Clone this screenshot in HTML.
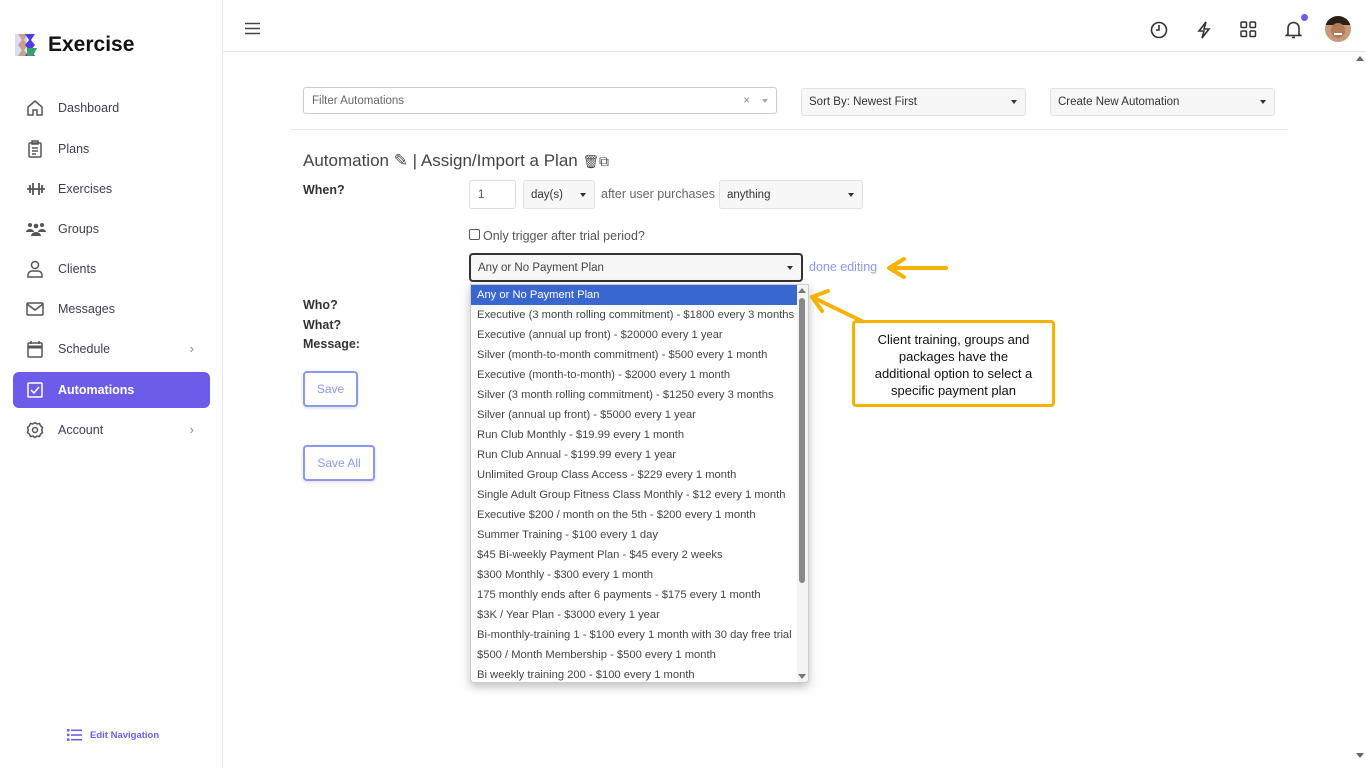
<!DOCTYPE html>
<html><head><meta charset="utf-8"><style>
*{box-sizing:border-box;margin:0;padding:0}
body{width:1366px;height:768px;overflow:hidden;background:#fff;font-family:"Liberation Sans",sans-serif;position:relative;color:#333}
.abs{position:absolute}
.side{left:0;top:0;width:223px;height:768px;border-right:1px solid #e8e8ee;background:#fff}
.nav{position:absolute;left:13px;width:197px;height:36px;border-radius:6px;font-size:12.5px;color:#3b3f52;display:flex;align-items:center;padding-left:45px}
.nav svg{position:absolute;left:13px;top:9px}
.nav.act{background:#6c5ce7;color:#fff;font-weight:bold}
.chev{position:absolute;right:16px;top:10px;font-size:13px;color:#888}
.hdr{left:223px;top:51px;width:1143px;height:1px;background:#e5e5ea}
.inp{border:1px solid #ccc;border-radius:3px;background:#fff;font-size:11.5px;color:#555;padding-left:8px;display:flex;align-items:center}
.sel{background:#f7f7f7;border:1px solid #e2e2e2;border-radius:3px;font-size:11.5px;color:#333;padding-left:7px;display:flex;align-items:center}
.caret{position:absolute;right:8px;top:50%;margin-top:-2px;border-left:3px solid transparent;border-right:3px solid transparent;border-top:4px solid #333}
.lbl{font-size:12.5px;font-weight:bold;color:#333}
.btn{border:2px solid #8c98f0;border-radius:4px;color:#8c98f0;font-size:12px;display:flex;align-items:center;justify-content:center;background:#fff;box-shadow:0 1px 3px rgba(0,0,0,.15)}
.list{left:470px;top:284px;width:339px;height:399px;background:#fff;border:1px solid #ccc;border-radius:0 0 4px 4px;box-shadow:0 4px 10px rgba(0,0,0,.25);overflow:hidden}
.list div{height:20px;line-height:20px;font-size:11.2px;color:#444;padding-left:6px;white-space:nowrap;width:327px}
.list div.hl{background:#3a66cf;color:#fff}
</style></head><body>
<div class="abs side">
  <svg class="abs" style="left:15px;top:32px" width="26" height="26" viewBox="0 0 26 26">
    <rect x="0" y="2" width="12" height="22" fill="#d8dcf5"/>
    <path d="M3 2h10l-4 6 4 5-4 5 4 6H3l4-6-4-5 4-5z" fill="#c9a088"/>
    <path d="M10 2h10l-4 6 4 5-4 5 4 6H10l4-6-4-5 4-5z" fill="#4b3fe0"/>
    <path d="M12 16h10l-4 8H12z" fill="#3aa06a"/>
  </svg>
  <div class="abs" style="left:48px;top:33px;font-size:21px;font-weight:bold;color:#111">Exercise</div>
  <div class="nav" style="top:90px"><svg width="18" height="18" viewBox="0 0 18 18" fill="none" stroke="#555" stroke-width="1.5"><path d="M2 8L9 2l7 6v8H11v-5H7v5H2z"/></svg>Dashboard</div>
  <div class="nav" style="top:131px"><svg width="18" height="18" viewBox="0 0 18 18" fill="none" stroke="#555" stroke-width="1.5"><rect x="3" y="3" width="12" height="14" rx="1"/><rect x="6" y="1" width="6" height="3"/><path d="M6 8h6M6 11h6M6 14h4"/></svg>Plans</div>
  <div class="nav" style="top:171px"><svg width="20" height="18" viewBox="0 0 20 18" fill="none" stroke="#555" stroke-width="1.8"><path d="M1 9h18M4 5v8M7 3v12M13 3v12M16 5v8"/></svg>Exercises</div>
  <div class="nav" style="top:211px"><svg width="20" height="18" viewBox="0 0 20 18" fill="#555"><circle cx="4" cy="5" r="2"/><circle cx="10" cy="6" r="2.3"/><circle cx="16" cy="5" r="2"/><path d="M0 12a4 3 0 018 0zM12 12a4 3 0 018 0zM5 16a5 4 0 0110 0z"/></svg>Groups</div>
  <div class="nav" style="top:251px"><svg width="18" height="18" viewBox="0 0 18 18" fill="none" stroke="#555" stroke-width="1.5"><circle cx="9" cy="5" r="3.5"/><path d="M2 17v-2a4 4 0 014-4h6a4 4 0 014 4v2z"/></svg>Clients</div>
  <div class="nav" style="top:291px"><svg width="18" height="18" viewBox="0 0 18 18" fill="none" stroke="#555" stroke-width="1.5"><rect x="1" y="3" width="16" height="12" rx="1"/><path d="M1 4l8 6 8-6"/></svg>Messages</div>
  <div class="nav" style="top:331px"><svg width="18" height="18" viewBox="0 0 18 18" fill="none" stroke="#555" stroke-width="1.5"><rect x="2" y="3" width="14" height="14" rx="1"/><path d="M2 7h14" stroke-width="3"/><path d="M5 1v3M13 1v3"/></svg>Schedule<span class="chev">›</span></div>
  <div class="nav act" style="top:372px"><svg width="18" height="18" viewBox="0 0 18 18" fill="none" stroke="#fff" stroke-width="1.5"><rect x="2" y="2" width="14" height="14" rx="1"/><path d="M5 9l3 3 5-6"/></svg>Automations</div>
  <div class="nav" style="top:412px"><svg width="18" height="18" viewBox="0 0 18 18" fill="none" stroke="#555" stroke-width="1.5"><circle cx="9" cy="9" r="2.5"/><path d="M9 1.5l2 1.5 2.5-.5 1 2.3 2 1.7-.8 2.5.8 2.5-2 1.7-1 2.3-2.5-.5-2 1.5-2-1.5-2.5.5-1-2.3-2-1.7.8-2.5L1.5 6.5l2-1.7 1-2.3L7 3z"/></svg>Account<span class="chev">›</span></div>
  <svg class="abs" style="left:67px;top:729px" width="15" height="12" viewBox="0 0 15 12" fill="#6c5ce7"><rect x="0" y="0" width="2.5" height="2.5"/><rect x="4" y="0.5" width="11" height="1.6"/><rect x="0" y="4.7" width="2.5" height="2.5"/><rect x="4" y="5.2" width="11" height="1.6"/><rect x="0" y="9.4" width="2.5" height="2.5"/><rect x="4" y="9.9" width="11" height="1.6"/></svg>
  <div class="abs" style="left:90px;top:730px;font-size:9.5px;font-weight:bold;color:#6c5ce7">Edit Navigation</div>
</div>
<div class="abs hdr"></div>
<svg class="abs" style="left:245px;top:22px" width="15" height="13" viewBox="0 0 15 13" stroke="#444" stroke-width="1.6"><path d="M0 1.5h15M0 6.5h15M0 11.5h15"/></svg>
<svg class="abs" style="left:1150px;top:21px" width="18" height="18" viewBox="0 0 18 18" fill="none" stroke="#333" stroke-width="1.6"><circle cx="9" cy="9" r="7.5"/><path d="M9 4v5H6"/></svg>
<svg class="abs" style="left:1196px;top:21px" width="16" height="18" viewBox="0 0 16 18" fill="none" stroke="#333" stroke-width="1.6"><path d="M10 1L3 10h5l-2 7 7-9H8z"/></svg>
<svg class="abs" style="left:1240px;top:21px" width="17" height="17" viewBox="0 0 17 17" fill="none" stroke="#333" stroke-width="1.5"><rect x="1" y="1" width="5.5" height="5.5" rx="1"/><rect x="10" y="1" width="5.5" height="5.5" rx="1"/><rect x="1" y="10" width="5.5" height="5.5" rx="1"/><rect x="10" y="10" width="5.5" height="5.5" rx="1"/></svg>
<svg class="abs" style="left:1285px;top:20px" width="17" height="19" viewBox="0 0 17 19" fill="none" stroke="#333" stroke-width="1.6"><path d="M3 14V8a5.5 5.5 0 0111 0v6l1.5 1.5h-14z"/><path d="M7 17.5h3"/></svg>
<div class="abs" style="left:1301px;top:14px;width:7px;height:7px;border-radius:50%;background:#6c5ce7"></div>
<div class="abs" style="left:1325px;top:16px;width:26px;height:26px;border-radius:50%;background:#c59a78;overflow:hidden"><div style="position:absolute;left:0;top:0;width:26px;height:9px;background:#2a2018"></div><div style="position:absolute;left:6px;top:7px;width:14px;height:15px;border-radius:50%;background:#b07c5a"></div><div style="position:absolute;left:9px;top:17px;width:8px;height:2px;background:#fff"></div></div>
<div class="abs" style="left:1356px;top:56px;border-left:4px solid transparent;border-right:4px solid transparent;border-bottom:5px solid #666"></div>
<div class="abs" style="left:1356px;top:753px;border-left:4px solid transparent;border-right:4px solid transparent;border-top:5px solid #666"></div>

<div class="abs inp" style="left:303px;top:87px;width:474px;height:27px;color:#666">Filter Automations<span style="position:absolute;right:26px;color:#888">×</span><span class="caret" style="border-top-color:#aaa"></span></div>
<div class="abs sel" style="left:801px;top:88px;width:225px;height:28px">Sort By: Newest First<span class="caret"></span></div>
<div class="abs sel" style="left:1050px;top:88px;width:225px;height:28px">Create New Automation<span class="caret"></span></div>
<div class="abs" style="left:290px;top:129px;width:998px;height:1px;background:#e5e5e5"></div>

<div class="abs" style="left:303px;top:151px;font-size:17px;color:#444">Automation ✎ | Assign/Import a Plan <span style="font-size:13px">🗑</span><span style="font-size:14px">⧉</span></div>
<div class="abs lbl" style="left:303px;top:183px">When?</div>
<div class="abs inp" style="left:469px;top:180px;width:47px;height:29px;border-color:#ddd">1</div>
<div class="abs sel" style="left:523px;top:180px;width:72px;height:29px">day(s)<span class="caret"></span></div>
<div class="abs" style="left:601px;top:187px;font-size:12.5px;color:#666">after user purchases</div>
<div class="abs sel" style="left:719px;top:180px;width:144px;height:29px">anything<span class="caret"></span></div>
<div class="abs" style="left:469px;top:229px;width:11px;height:11px;border:1px solid #555;border-radius:2px"></div>
<div class="abs" style="left:483px;top:229px;font-size:12.5px;color:#555">Only trigger after trial period?</div>
<div class="abs sel" style="left:469px;top:253px;width:334px;height:29px;border:2px solid #333;border-radius:4px;color:#444">Any or No Payment Plan<span class="caret"></span></div>
<div class="abs" style="left:809px;top:260px;font-size:12.5px;color:#8c98f0">done editing</div>

<div class="abs lbl" style="left:303px;top:298px">Who?</div>
<div class="abs lbl" style="left:303px;top:318px">What?</div>
<div class="abs lbl" style="left:303px;top:337px">Message:</div>
<div class="abs btn" style="left:303px;top:371px;width:55px;height:36px">Save</div>
<div class="abs btn" style="left:303px;top:445px;width:72px;height:36px">Save All</div>

<div class="abs list">
<div class="hl">Any or No Payment Plan</div>
<div>Executive (3 month rolling commitment) - $1800 every 3 months</div>
<div>Executive (annual up front) - $20000 every 1 year</div>
<div>Silver (month-to-month commitment) - $500 every 1 month</div>
<div>Executive (month-to-month) - $2000 every 1 month</div>
<div>Silver (3 month rolling commitment) - $1250 every 3 months</div>
<div>Silver (annual up front) - $5000 every 1 year</div>
<div>Run Club Monthly - $19.99 every 1 month</div>
<div>Run Club Annual - $199.99 every 1 year</div>
<div>Unlimited Group Class Access - $229 every 1 month</div>
<div>Single Adult Group Fitness Class Monthly - $12 every 1 month</div>
<div>Executive $200 / month on the 5th - $200 every 1 month</div>
<div>Summer Training - $100 every 1 day</div>
<div>$45 Bi-weekly Payment Plan - $45 every 2 weeks</div>
<div>$300 Monthly - $300 every 1 month</div>
<div>175 monthly ends after 6 payments - $175 every 1 month</div>
<div>$3K / Year Plan - $3000 every 1 year</div>
<div>Bi-monthly-training 1 - $100 every 1 month with 30 day free trial</div>
<div>$500 / Month Membership - $500 every 1 month</div>
<div>Bi weekly training 200 - $100 every 1 month</div>
<span style="position:absolute;right:0;top:0;width:11px;height:399px;background:#f4f4f4"></span>
<span style="position:absolute;right:3px;top:13px;width:6px;height:285px;background:#888;border-radius:3px"></span>
<span style="position:absolute;right:2px;top:3px;border-left:4px solid transparent;border-right:4px solid transparent;border-bottom:5px solid #777"></span>
<span style="position:absolute;right:2px;bottom:3px;border-left:4px solid transparent;border-right:4px solid transparent;border-top:5px solid #777"></span>
</div>

<svg class="abs" style="left:800px;top:255px" width="160" height="80" viewBox="0 0 160 80" fill="none" stroke="#f5b300" stroke-width="4" stroke-linecap="round" stroke-linejoin="round">
<path d="M146 13H90M104 4L89 13l15 9"/>
<path d="M70 70L12 42M28 36l-16 6 10 14"/>
</svg>
<div class="abs" style="left:852px;top:320px;width:203px;height:87px;border:3px solid #f5b300;border-radius:4px;background:#fff;font-size:13px;color:#111;text-align:center;line-height:17px;padding-top:8px">Client training, groups and<br>packages have the<br>additional option to select a<br>specific payment plan</div>
</body></html>
